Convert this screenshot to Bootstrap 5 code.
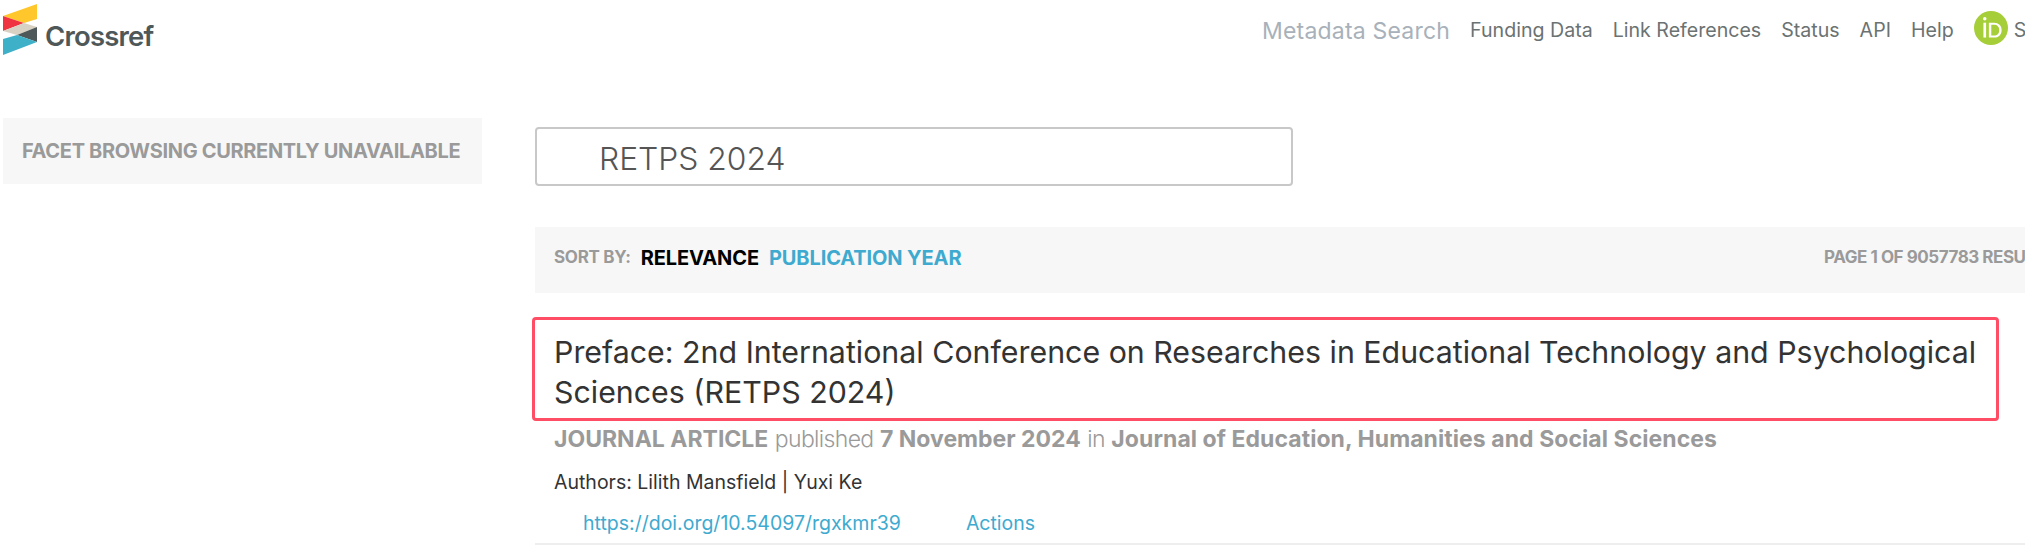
<!DOCTYPE html>
<html lang="en">
<head>
<meta charset="utf-8">
<title>Crossref Metadata Search</title>
<link rel="stylesheet" href="https://cdn.jsdelivr.net/npm/bootstrap@5.3.0/dist/css/bootstrap.min.css">
<style>
html,body{overflow:hidden;height:551px;background:#fff}
body{font-family:Inter,"Liberation Sans",sans-serif;color:#4f5858;width:2025px}
.cr-top{height:118px;width:2100px}
.cr-brand{width:1262px;padding:3px 0 0 2px;gap:3px}
.cr-word{font-size:27.5px;font-weight:600;color:#4f5858;letter-spacing:-.8px;line-height:1;margin-top:20px}
.cr-nav{padding-top:10px;gap:20px;height:52px}
.cr-nav a{color:#6b7272;text-decoration:none;font-size:19.6px;white-space:nowrap}
.cr-nav a.cr-meta{color:#a8b1ba;font-size:23px;letter-spacing:.2px}
.cr-orcid svg{margin-bottom:6px}
.cr-orcid{gap:6px}
.cr-body{width:2100px}
.cr-side{width:479px;height:66px;margin-left:3px;background:#f7f7f7;color:#9a9a9a;font-weight:700;font-size:20px;padding:0 0 0 19px;letter-spacing:-.33px;flex-shrink:0}
.cr-main{margin-left:53px;width:1530px;flex-shrink:0}
.cr-search{width:758px;height:59px;margin-top:9px;border:2px solid #c8c8c8;border-radius:4px;padding:4px 0 0 62px;font-size:31.8px;color:#555;font-weight:300}
.cr-sort{height:66px;margin-top:41px;background:#f7f7f7;padding:0 0 4px 19px}
.cr-sort .cr-label{color:#9a9a9a;font-weight:700;font-size:17px;letter-spacing:-.3px;margin-right:10px}
.cr-sort .cr-on{color:#000;font-weight:700;font-size:20px;letter-spacing:-.1px;margin-right:10px}
.cr-sort .cr-off{color:#3eaacf;font-weight:700;font-size:20px;letter-spacing:-.12px}
.cr-sort .cr-page{color:#9a9a9a;font-weight:700;font-size:17px;letter-spacing:-.45px;margin-left:auto;width:241px;white-space:nowrap;overflow:hidden}
.cr-result{border-bottom:2px solid #eee;height:228px;width:1490px}
.cr-title{margin:24px 0 0 -3px;width:1467px;height:104px;border:3px solid #ff4d66;border-radius:4px;padding:12px 0 0 19px;font-size:30.35px;line-height:40px;color:#333;font-weight:400}
.cr-meta-line{margin:3px 0 0 19px;font-size:23px;color:#9a9a9a;line-height:30px}
.cr-meta-line b{font-weight:700}
.cr-meta-line span{letter-spacing:-.65px;font-weight:300}
.cr-meta-line b:last-child{letter-spacing:.06px}
.cr-authors{margin:15px 0 0 19px;font-size:19.5px;color:#333;line-height:26px}
.cr-links{margin:15px 0 0 48px;gap:65px;font-size:19.5px;line-height:26px}
.cr-links a{color:#3eaacf;text-decoration:none}
</style>
</head>
<body>
<header class="cr-top d-flex align-items-start">
  <div class="cr-brand d-flex flex-shrink-0">
    <svg width="40" height="53" viewBox="0 0 40 53" aria-label="Crossref logo">
      <polygon points="1,13 35,1 35,16 22,20" fill="#ffc72c"/>
      <polygon points="1,13 22,20 1,28" fill="#ef3340"/>
      <polygon points="1,28 22,20 35,24 15,32" fill="#d8d2c4"/>
      <polygon points="35,24 35,39 15,32" fill="#4f5858"/>
      <polygon points="1,36 15,32 35,39 1,52" fill="#3eb1c8"/>
    </svg>
    <span class="cr-word">Crossref</span>
  </div>
  <nav class="cr-nav d-flex align-items-center flex-shrink-0">
    <a class="cr-meta" href="#">Metadata Search</a>
    <a href="#">Funding Data</a>
    <a href="#">Link References</a>
    <a href="#">Status</a>
    <a href="#">API</a>
    <a href="#">Help</a>
    <a href="#" class="cr-orcid d-flex align-items-center">
      <svg width="34" height="34" viewBox="0 0 256 256" aria-label="ORCID iD">
        <circle cx="128" cy="128" r="128" fill="#a6ce39"/>
        <rect x="71" y="88" width="20" height="112" fill="#fff"/>
        <circle cx="81" cy="58" r="13" fill="#fff"/>
        <path d="M112 88h40c32 0 56 22 56 56s-24 56-56 56h-40zM130 104v80h22c22 0 38-15 38-40s-16-40-38-40z" fill="#fff" fill-rule="evenodd"/>
      </svg>Sign in with ORCID</a>
  </nav>
</header>
<div class="cr-body d-flex align-items-start">
  <aside class="cr-side d-flex align-items-center">FACET BROWSING CURRENTLY UNAVAILABLE</aside>
  <main class="cr-main">
    <div class="cr-search d-flex align-items-center">RETPS 2024</div>
    <div class="cr-sort d-flex align-items-center">
      <span class="cr-label">SORT BY:</span>
      <span class="cr-on">RELEVANCE</span>
      <span class="cr-off">PUBLICATION YEAR</span>
      <span class="cr-page">PAGE 1 OF 9057783 RESULTS</span>
    </div>
    <article class="cr-result">
      <div class="cr-title">Preface: 2nd International Conference on Researches in Educational Technology and Psychological Sciences (RETPS 2024)</div>
      <div class="cr-meta-line"><b>JOURNAL ARTICLE</b> <span>published</span> <b>7 November 2024</b> <span>in</span> <b>Journal of Education, Humanities and Social Sciences</b></div>
      <div class="cr-authors">Authors: Lilith Mansfield | Yuxi Ke</div>
      <div class="cr-links d-flex">
        <a href="#">https://doi.org/10.54097/rgxkmr39</a>
        <a href="#">Actions</a>
      </div>
    </article>
  </main>
</div>
</body>
</html>
